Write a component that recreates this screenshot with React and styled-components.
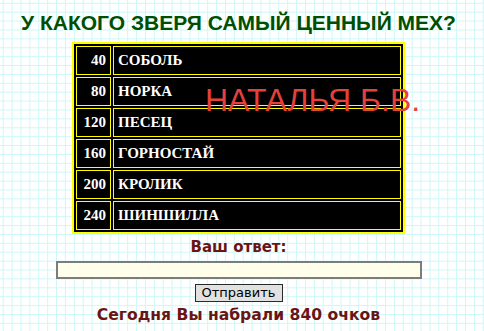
import React from "react";
import styled, { createGlobalStyle } from "styled-components";

const Global = createGlobalStyle`
  html, body { margin: 0; padding: 0; }
  body {
    width: 484px;
    height: 331px;
    overflow: hidden;
    background-color: #ffffff;
    background-image:
      linear-gradient(to right, #cdf8f8 1px, transparent 1px),
      linear-gradient(to bottom, #cdf8f8 1px, transparent 1px);
    background-size: 8.9px 8.9px;
    background-position: 2.7px 2.8px;
  }
`;

const Page = styled.div`
  width: 477px;
  height: 331px;
  display: flex;
  flex-direction: column;
  align-items: center;
`;

const Title = styled.h1`
  margin: 11px 0 0 0;
  font-family: "Liberation Sans", Arial, sans-serif;
  font-weight: bold;
  font-size: 21px;
  line-height: 24px;
  color: #004f00;
  white-space: nowrap;
`;

const BoardWrap = styled.div`
  position: relative;
  margin-top: 7px;
`;

const Board = styled.table`
  border-collapse: separate;
  border-spacing: 2px;
  border: 2px solid #ffff00;
  background: #000;
  width: 333px;
`;

const Cell = styled.td`
  border: 1px solid #ffff00;
  height: 27px;
  padding: 0 4px;
  font-family: "Liberation Serif", "Times New Roman", serif;
  font-weight: bold;
  font-size: 15px;
  color: #fff;
  text-align: ${(p) => (p.$num ? "right" : "left")};
  width: ${(p) => (p.$num ? "25px" : "auto")};
  vertical-align: middle;
  white-space: nowrap;
`;

const Watermark = styled.div`
  position: absolute;
  left: 133px;
  top: 42px;
  font-family: "Liberation Sans", Arial, sans-serif;
  font-size: 32px;
  line-height: 32px;
  color: #e5403a;
  white-space: nowrap;
  pointer-events: none;
`;

const Label = styled.div`
  margin-top: 3px;
  font-family: "DejaVu Sans", Verdana, sans-serif;
  font-weight: bold;
  font-size: 15px;
  line-height: 20px;
  color: #6b1414;
`;

const AnswerInput = styled.input`
  margin-top: 4px;
  box-sizing: border-box;
  width: 366px;
  height: 18px;
  border: 2px solid #7c7c7c;
  background: #fffeea;
  padding: 0 2px;
  outline: none;
  font-family: "DejaVu Sans", Verdana, sans-serif;
  font-size: 12px;
`;

const SendButton = styled.button`
  margin-top: 5px;
  box-sizing: border-box;
  width: 88px;
  height: 18px;
  padding: 0;
  border: 1px solid #2a2a2a;
  background: #e1e1e1;
  font-family: "DejaVu Sans", Verdana, sans-serif;
  font-size: 13px;
  line-height: 16px;
  color: #000;
`;

const Score = styled.div`
  margin-top: 2px;
  font-family: "DejaVu Sans", Verdana, sans-serif;
  font-weight: bold;
  font-size: 15.6px;
  line-height: 22px;
  color: #6b1414;
  white-space: nowrap;
`;

const rows = [
  [40, "СОБОЛЬ"],
  [80, "НОРКА"],
  [120, "ПЕСЕЦ"],
  [160, "ГОРНОСТАЙ"],
  [200, "КРОЛИК"],
  [240, "ШИНШИЛЛА"],
];

export default function App() {
  return (
    <>
      <Global />
      <Page>
        <Title>У КАКОГО ЗВЕРЯ САМЫЙ ЦЕННЫЙ МЕХ?</Title>
        <BoardWrap>
          <Board>
            <tbody>
              {rows.map(([pts, name]) => (
                <tr key={pts}>
                  <Cell $num>{pts}</Cell>
                  <Cell>{name}</Cell>
                </tr>
              ))}
            </tbody>
          </Board>
          <Watermark>НАТАЛЬЯ Б.В.</Watermark>
        </BoardWrap>
        <Label>Ваш ответ:</Label>
        <AnswerInput type="text" autoFocus />
        <SendButton type="button">Отправить</SendButton>
        <Score>Сегодня Вы набрали 840 очков</Score>
      </Page>
    </>
  );
}
